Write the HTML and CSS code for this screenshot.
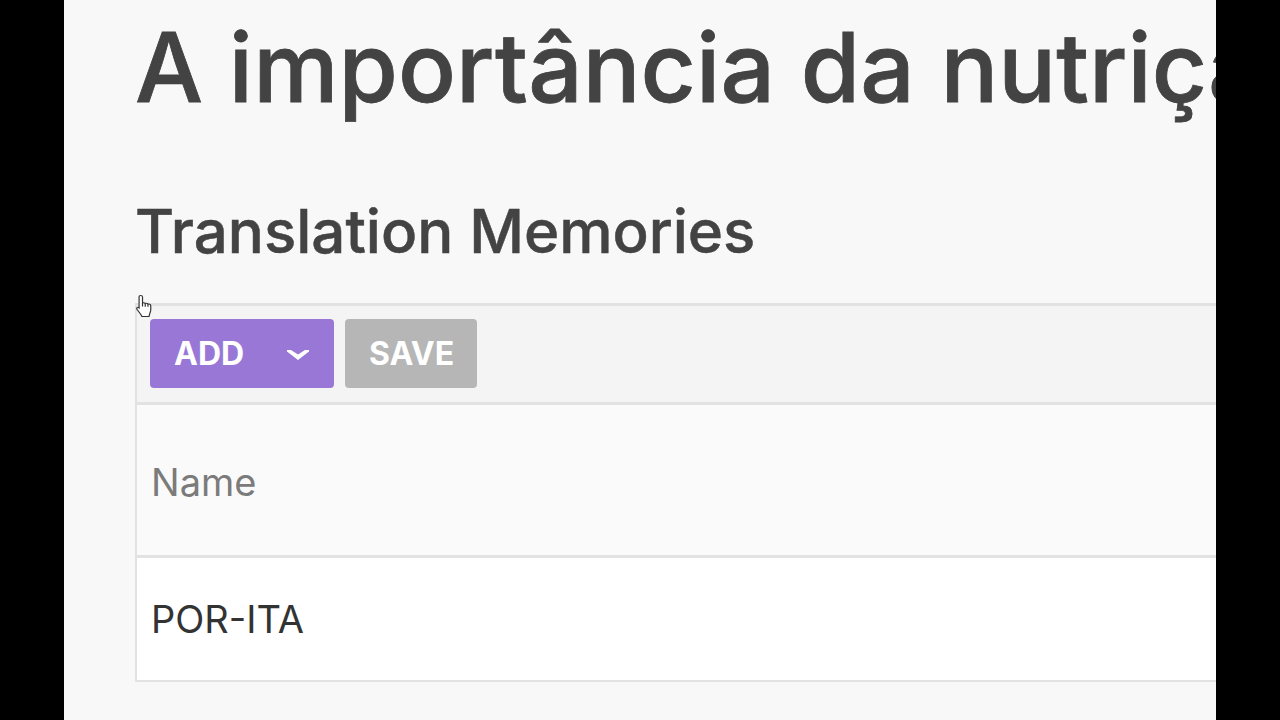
FILE: index.html
```html
<!DOCTYPE html>
<html>
<head>
  <link rel="stylesheet" href="styles.css">
</head>
<body>
  <div class="page">
    <h1 class="title">A importância da nutrição</h1>
    <h2 class="subtitle">Translation Memories</h2>

    <div class="panel">
      <svg class="cursor" width="16" height="22" viewBox="0.5 0.5 13.5 21" preserveAspectRatio="none">
        <path d="M4.500 1c1 0 1.500.6 1.500 1.500v5.700c1-.4 1.900-.3 2.300.4 1-.4 1.900-.2 2.300.6 1-.3 2.100.1 2.300 1.200.1 1.500.100 3.300 0 4.800-.2 2-1.100 3.300-1.400 5.800H5.500c-.6-2-2.400-3.800-4.200-7-.6-1.200.7-2.200 1.700-1.300l.1.100V2.500C3.100 1.600 3.500 1 4.500 1z" fill="#fff" stroke="#333" stroke-width="1"/>
        <path d="M6 8.200v3.300M8.300 8.600v3M10.600 9.200v2.500" fill="none" stroke="#333" stroke-width="1"/>
      </svg>
      <div class="toolbar">
        <button class="btn btn-add">
          <span>ADD</span>
          <svg class="chevron" width="24" height="14" viewBox="0 0 24 14">
            <path d="M1 2h4l7 4.500L19 2h4v1.500L12 12 1 3.500z" fill="#fff"/>
          </svg>
        </button>
        <button class="btn btn-save">SAVE</button>
      </div>
      <div class="row-head">Name</div>
      <div class="row">POR-ITA</div>
    </div>
  </div>
</body>
</html>
```
FILE: styles.css
```css
html, body {
  height: 100%;
}

body {
  margin: 0;
  background: #000000;
  font-family: Inter, sans-serif;
  overflow: hidden;
}

.page {
  box-sizing: border-box;
  width: 1152px;
  height: 720px;
  margin: 0 64px;
  padding: 0 0 0 71px;
  background: #F8F8F8;
  overflow: hidden;
}

.title {
  margin: 9px 0 0;
  font-size: 96px;
  line-height: 116px;
  font-weight: 500;
  letter-spacing: 0.1px;
  -webkit-text-stroke: 0.8px #434343;
  color: #434343;
  white-space: nowrap;
}

.subtitle {
  margin: 71px 0 0;
  font-size: 60px;
  line-height: 70px;
  font-weight: 500;
  -webkit-text-stroke: 0.5px #434343;
  color: #434343;
  white-space: nowrap;
}

.panel {
  position: relative;
  margin-top: 37px;
  border-top: 3px solid #E2E2E2;
  border-left: 2px solid #E2E2E2;
  border-bottom: 2px solid #E2E2E2;
}

.cursor {
  position: absolute;
  left: -1px;
  top: -11px;
}

.toolbar {
  display: flex;
  gap: 11px;
  padding: 13px 13px 14px;
  background: #F4F4F4;
  border-bottom: 3px solid #E2E2E2;
}

.btn {
  display: flex;
  align-items: center;
  height: 69px;
  padding: 0 24px;
  border: none;
  border-radius: 4px;
  font-family: Inter, sans-serif;
  font-size: 32px;
  font-weight: 700;
  color: #FFFFFF;
}

.btn-add {
  width: 184px;
  justify-content: space-between;
  background: #9977D7;
}

.chevron {
  margin-top: 2px;
}

.btn-save {
  width: 132px;
  background: #B6B6B6;
}

.row-head {
  display: flex;
  align-items: center;
  box-sizing: border-box;
  height: 153px;
  padding: 4px 0 0 14px;
  background: #FAFAFA;
  border-bottom: 3px solid #E2E2E2;
  font-size: 38px;
  color: #7B7B7B;
}

.row {
  display: flex;
  align-items: center;
  height: 122px;
  padding-left: 14px;
  background: #FFFFFF;
  font-size: 38px;
  color: #333333;
}
```
